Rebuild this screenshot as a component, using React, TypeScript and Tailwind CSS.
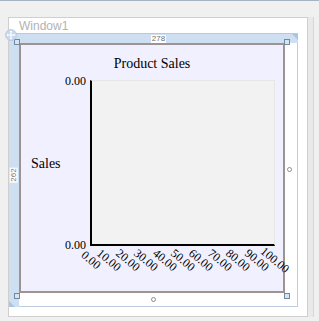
import React from "react";

const xTicks = ["0.00", "10.00", "20.00", "30.00", "40.00", "50.00", "60.00", "70.00", "80.00", "90.00", "100.00"];

function Handle({ className }: { className: string }) {
  return <div className={`absolute w-[6px] h-[6px] border border-[#6f8aa6] bg-[#d9e3ee] ${className}`} />;
}

function MoveIcon() {
  return (
    <svg width="12" height="12" viewBox="0 0 12 12" className="absolute left-[-4px] top-[-4px]">
      <circle cx="6" cy="6" r="5.5" fill="#c9d9ee" stroke="#b4c8e2" strokeWidth="0.8" />
      <path d="M6 2v8M2 6h8" stroke="#ffffff" strokeWidth="1.2" />
      <path d="M6 1.5l1.3 1.6H4.7zM6 10.5l1.3-1.6H4.7zM1.5 6l1.6-1.3v2.6zM10.5 6l-1.6-1.3v2.6z" fill="#ffffff" />
    </svg>
  );
}

export default function App() {
  return (
    <div className="w-[319px] h-[321px] overflow-hidden bg-[#f0f0f0] border-t border-[#a6b3c1] pt-[16px] pl-[8px]">
      {/* window */}
      <div className="w-[300px] h-[300px] bg-white border border-[#cfcfcf] shadow-[5px_0_0_#e9e9e9,6px_0_0_#d6d6d6]">
        <div className="h-[15px] pl-[10px] pt-[1px] text-[12px] leading-[14px] text-[#b3b3b3] font-['Liberation_Sans',Arial,sans-serif]">
          Window1
        </div>

        {/* design surface with rulers */}
        <div className="relative grid grid-cols-[10px_279px] grid-rows-[10px_264px]">
          <div className="relative bg-[#cfdff2] border-t border-[#b0cae8]">
            <div className="absolute left-0 top-0 w-[6px] h-[6px] bg-[#a9c5e6] [clip-path:polygon(0_0,100%_0,0_100%)]" />
          </div>
          <div className="relative bg-[#cfdff2] border-t border-[#b0cae8] flex items-center justify-center">
            <span className="bg-white px-[1px] text-[8px] leading-[8px] text-[#707070] font-['Liberation_Sans',Arial,sans-serif]">
              278
            </span>
            <div className="absolute right-0 top-0 w-[6px] h-[6px] bg-[#a9c5e6] [clip-path:polygon(0_0,100%_0,100%_100%)]" />
          </div>
          <div className="relative bg-[#cfdff2] flex items-center justify-center">
            <span className="-rotate-90 bg-white px-[1px] text-[8px] leading-[8px] text-[#707070] font-['Liberation_Sans',Arial,sans-serif]">
              262
            </span>
            <div className="absolute left-0 bottom-0 w-[6px] h-[6px] bg-[#a9c5e6] [clip-path:polygon(0_0,0_100%,100%_100%)]" />
          </div>

          <div className="border-r border-b border-[#bccde0]">
            {/* chart control */}
            <div className="relative w-[266px] h-[250px] border-2 border-[#9e9393] bg-[#f0f0ff] text-black font-['Liberation_Serif','Times_New_Roman',serif]">
              <div className="h-[35px] pt-[10px] text-center text-[14px] leading-[17px]">Product Sales</div>

              <div className="flex h-[166px]">
                <div className="w-[45px] pl-[10px] flex items-center text-[14px] leading-[17px]">Sales</div>
                <div className="w-[24px] pr-[4px] flex flex-col justify-between items-end mt-[-6px] mb-[-6px] text-[12px] leading-[14px]">
                  <span>0.00</span>
                  <span>0.00</span>
                </div>
                <div className="w-[185px] bg-[#f2f2f2] border-l-2 border-b-2 border-black border-t border-r border-t-[#e6e6e6] border-r-[#e6e6e6]" />
              </div>

              <div className="relative ml-[70px] w-[184px] h-[40px]">
                {xTicks.map((t, i) => (
                  <span
                    key={t}
                    className="absolute top-[14px] whitespace-nowrap text-[12px] leading-[14px] -translate-x-1/2 -translate-y-1/2 rotate-[40deg]"
                    style={{ left: `${i * 10}%` }}
                  >
                    {t}
                  </span>
                ))}
              </div>

              <Handle className="left-[-7px] top-[-6px]" />
              <Handle className="right-[-7px] top-[-6px]" />
              <Handle className="left-[-7px] bottom-[-8px]" />
              <Handle className="right-[-7px] bottom-[-8px]" />
              <div className="absolute left-[266px] top-[122px] w-[5px] h-[5px] rounded-full border border-[#8c8c8c] bg-white" />
              <div className="absolute left-[130px] top-[252px] w-[5px] h-[5px] rounded-full border border-[#8c8c8c] bg-white" />
            </div>
          </div>

          <MoveIcon />
        </div>
      </div>
    </div>
  );
}
